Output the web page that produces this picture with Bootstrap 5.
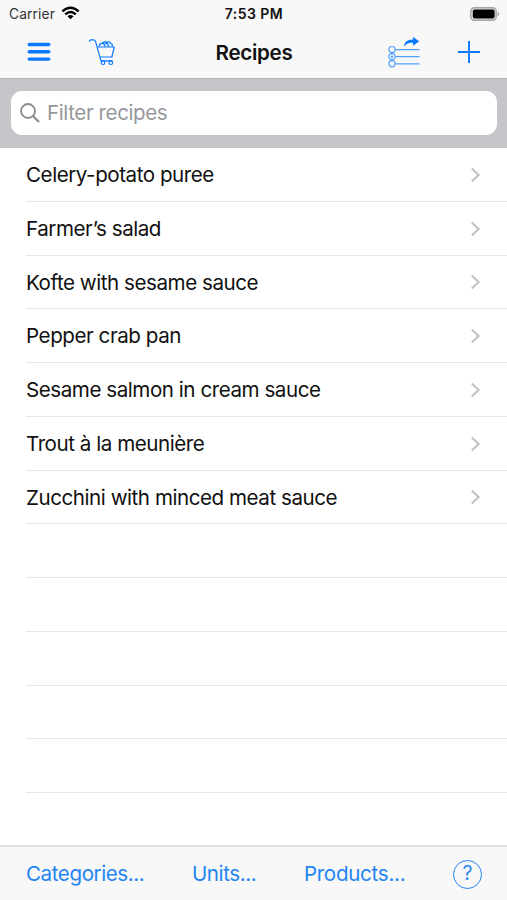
<!DOCTYPE html>
<html lang="en">
<head>
<meta charset="utf-8">
<meta name="viewport" content="width=device-width, initial-scale=1">
<title>Recipes</title>
<link rel="stylesheet" href="https://cdn.jsdelivr.net/npm/bootstrap@5.3.0/dist/css/bootstrap.min.css">
<style>
  :root { --ios-blue: #0a7aff; }
  body { font-family: Inter, "Liberation Sans", sans-serif; color: #111; font-size: 20.6px; line-height: 1.2; }
  svg { display: block; flex: none; }
  .app { height: 900px; }
  .top-area { background: #f8f8f8; height: 79px; border-bottom: 1px solid #b4b4b6; }
  .status { height: 27px; font-size: 13.8px; padding: 0 7px 0 9px; }
  .status > *, .titlebar > * { flex: 1 1 0; }
  .carrier { letter-spacing: .1px; color: #333; padding-top: 1px; }
  .wifi { margin-left: 2px; }
  .clock { font-size: 14px; font-weight: 600; letter-spacing: .45px; padding: 1px 1px 0 0; }
  .titlebar { height: 50px; padding: 0 27px 0 26px; }
  .titlebar h1 { font-size: 20.6px; font-weight: 600; letter-spacing: -.3px; padding: 2px 0 0 2px; }
  .icon-btn { color: var(--ios-blue); line-height: 0; }
  .cart-link { margin-left: 36px; }
  .share-link { margin-right: 37px; }
  .search-area { background: #c6c6ca; height: 69px; padding: 12px 10px 12px 11px; }
  .search-box { background: #fff; height: 44px; border-radius: 11px; padding: 0 9px; gap: 7px; }
  .search-box input { font-size: 20.6px; letter-spacing: -.42px; color: #111; padding-top: 1px !important; }
  .search-box input::placeholder { color: #97979a; opacity: 1; }
  .recipes { padding-left: 26px; }
  .recipe { height: 53.75px; border: 0; border-bottom: 1px solid #e6e6e8; border-radius: 0; padding: 1px 26px 0 0; color: #111; background: transparent; letter-spacing: -.46px; }
  .recipe span { padding-top: 1px; }
  .bottom-bar { background: #f8f8f8; height: 55px; border-top: 2px solid #e2e2e4; padding: 1px 25px 0 26px; }
  .bottom-bar a { color: #2385f2; letter-spacing: -.43px; }
  .bottom-bar .products { letter-spacing: -.3px; }
  .bottom-bar .help { width: 29px; height: 29px; border: 1.5px solid #2385f2; font-size: 19.5px; letter-spacing: 0; }
</style>
<script src="https://cdn.jsdelivr.net/npm/bootstrap@5.3.0/dist/js/bootstrap.bundle.min.js"></script>
</head>
<body>
<div class="app d-flex flex-column overflow-hidden bg-white">
  <header class="top-area flex-shrink-0">
    <div class="status d-flex align-items-center">
      <div class="d-flex align-items-center gap-1"><span class="carrier">Carrier</span>
        <svg class="wifi" width="19" height="14" viewBox="0 0 20 14" fill="none" stroke="#000" stroke-width="2.5"><path d="M1.4 5.2Q10-2.3 18.6 5.2M4.5 8.4Q10 3.6 15.5 8.4"/><path d="M6.8 10.4Q10 7.8 13.2 10.4L10 13.6Z" fill="#000" stroke="none"/></svg>
      </div>
      <div class="clock text-center">7:53 PM</div>
      <div class="d-flex justify-content-end">
        <svg width="30" height="14" viewBox="0 0 30 14"><rect x=".8" y=".8" width="25.4" height="12.4" rx="3.6" fill="#e0e0e0" stroke="#a4a4a4" stroke-width="1.4"/><rect x="2.8" y="2.6" width="21.8" height="8.8" rx="1.8"/><path d="M27.6 4.5Q31 7 27.6 9.5Z" fill="#a4a4a4"/></svg>
      </div>
    </div>
    <nav class="titlebar d-flex align-items-center" aria-label="Main">
      <div class="d-flex align-items-center">
        <a class="icon-btn" href="#" aria-label="Menu"><svg width="26" height="20" viewBox="0 0 26 20" stroke="currentColor" stroke-width="3.4" stroke-linecap="round"><path d="M3.2 2.5H22.8M3.2 9.8H22.8M3.2 17.1H22.8"/></svg></a>
        <a class="icon-btn cart-link" href="#" aria-label="Shopping cart"><svg width="30" height="30" viewBox="0 0 30 30" fill="none" stroke="currentColor" stroke-width="1.2" stroke-linejoin="round"><path d="M1.8 4.8Q1 2.8 3 2.8H5.5Q7 2.8 7.6 4.6L13 23.8H24.5M9.7 10H26.3L23.8 20H12.2"/><path d="M11.5 9.6V7.6L15 5.6L17.5 9.6M15 5.6L18.2 4.6L21 9.6M17 7L20.8 4.8L24.3 7.4V9.6" stroke-width="1.3"/><circle cx="15" cy="25.7" r="1.8"/><circle cx="22.8" cy="25.7" r="1.8"/></svg></a>
      </div>
      <h1 class="text-center m-0">Recipes</h1>
      <div class="d-flex align-items-center justify-content-end">
        <a class="icon-btn share-link" href="#" aria-label="Share list"><svg width="34" height="32" viewBox="0 0 34 32" fill="none" stroke="currentColor"><g stroke-width="1.2" opacity=".7"><circle cx="5" cy="13.6" r="3.1"/><circle cx="5" cy="20.7" r="3.1"/><circle cx="5" cy="27.8" r="3.1"/><path d="M8.2 13.6H32.5M8.2 20.7H32.5M8.2 27.8H32.5"/><circle cx="5" cy="20.7" r=".6"/></g><path d="M17.2 11Q17 3.6 26 3.6V1L32.3 5.3L26 9.7V6.7Q19.5 6.2 17.2 11Z" fill="currentColor" stroke="none"/></svg></a>
        <a class="icon-btn" href="#" aria-label="Add"><svg width="22" height="22" viewBox="0 0 22 22" stroke="currentColor" stroke-width="1.9"><path d="M0 11H22M11 0V22"/></svg></a>
      </div>
    </nav>
  </header>
  <div class="search-area flex-shrink-0">
    <label class="search-box d-flex align-items-center">
      <svg width="20" height="20" viewBox="0 0 20 20" fill="none" stroke="#8c8c90" stroke-width="1.8"><circle cx="8" cy="8" r="7"/><path d="M13 13L19 19" stroke-width="2.2"/></svg>
      <input class="border-0 p-0 bg-transparent flex-grow-1" type="text" placeholder="Filter recipes">
    </label>
  </div>
  <main class="list-group recipes rounded-0 flex-grow-1 overflow-hidden" id="recipes"></main>
  <footer class="bottom-bar d-flex align-items-center justify-content-between flex-shrink-0">
    <a class="text-decoration-none" href="#">Categories...</a>
    <a class="text-decoration-none" href="#">Units...</a>
    <a class="products text-decoration-none" href="#">Products...</a>
    <a class="help text-decoration-none rounded-circle d-flex align-items-center justify-content-center" href="#">?</a>
  </footer>
</div>
<script>
  const names = ["Celery-potato puree", "Farmer’s salad", "Kofte with sesame sauce", "Pepper crab pan", "Sesame salmon in cream sauce", "Trout à la meunière", "Zucchini with minced meat sauce", "", "", "", "", ""];
  const arrow = '<svg width="11" height="16" viewBox="0 0 11 16" fill="none" stroke="#c2c2c6" stroke-width="2.1"><path d="M1.8 1.6L8.6 8L1.8 14.4"/></svg>';
  document.getElementById("recipes").innerHTML = names.map(n =>
    '<div class="recipe list-group-item flex-shrink-0 d-flex align-items-center justify-content-between">' + (n ? '<span>' + n + '</span>' + arrow : '') + '</div>').join("");
</script>
</body>
</html>
